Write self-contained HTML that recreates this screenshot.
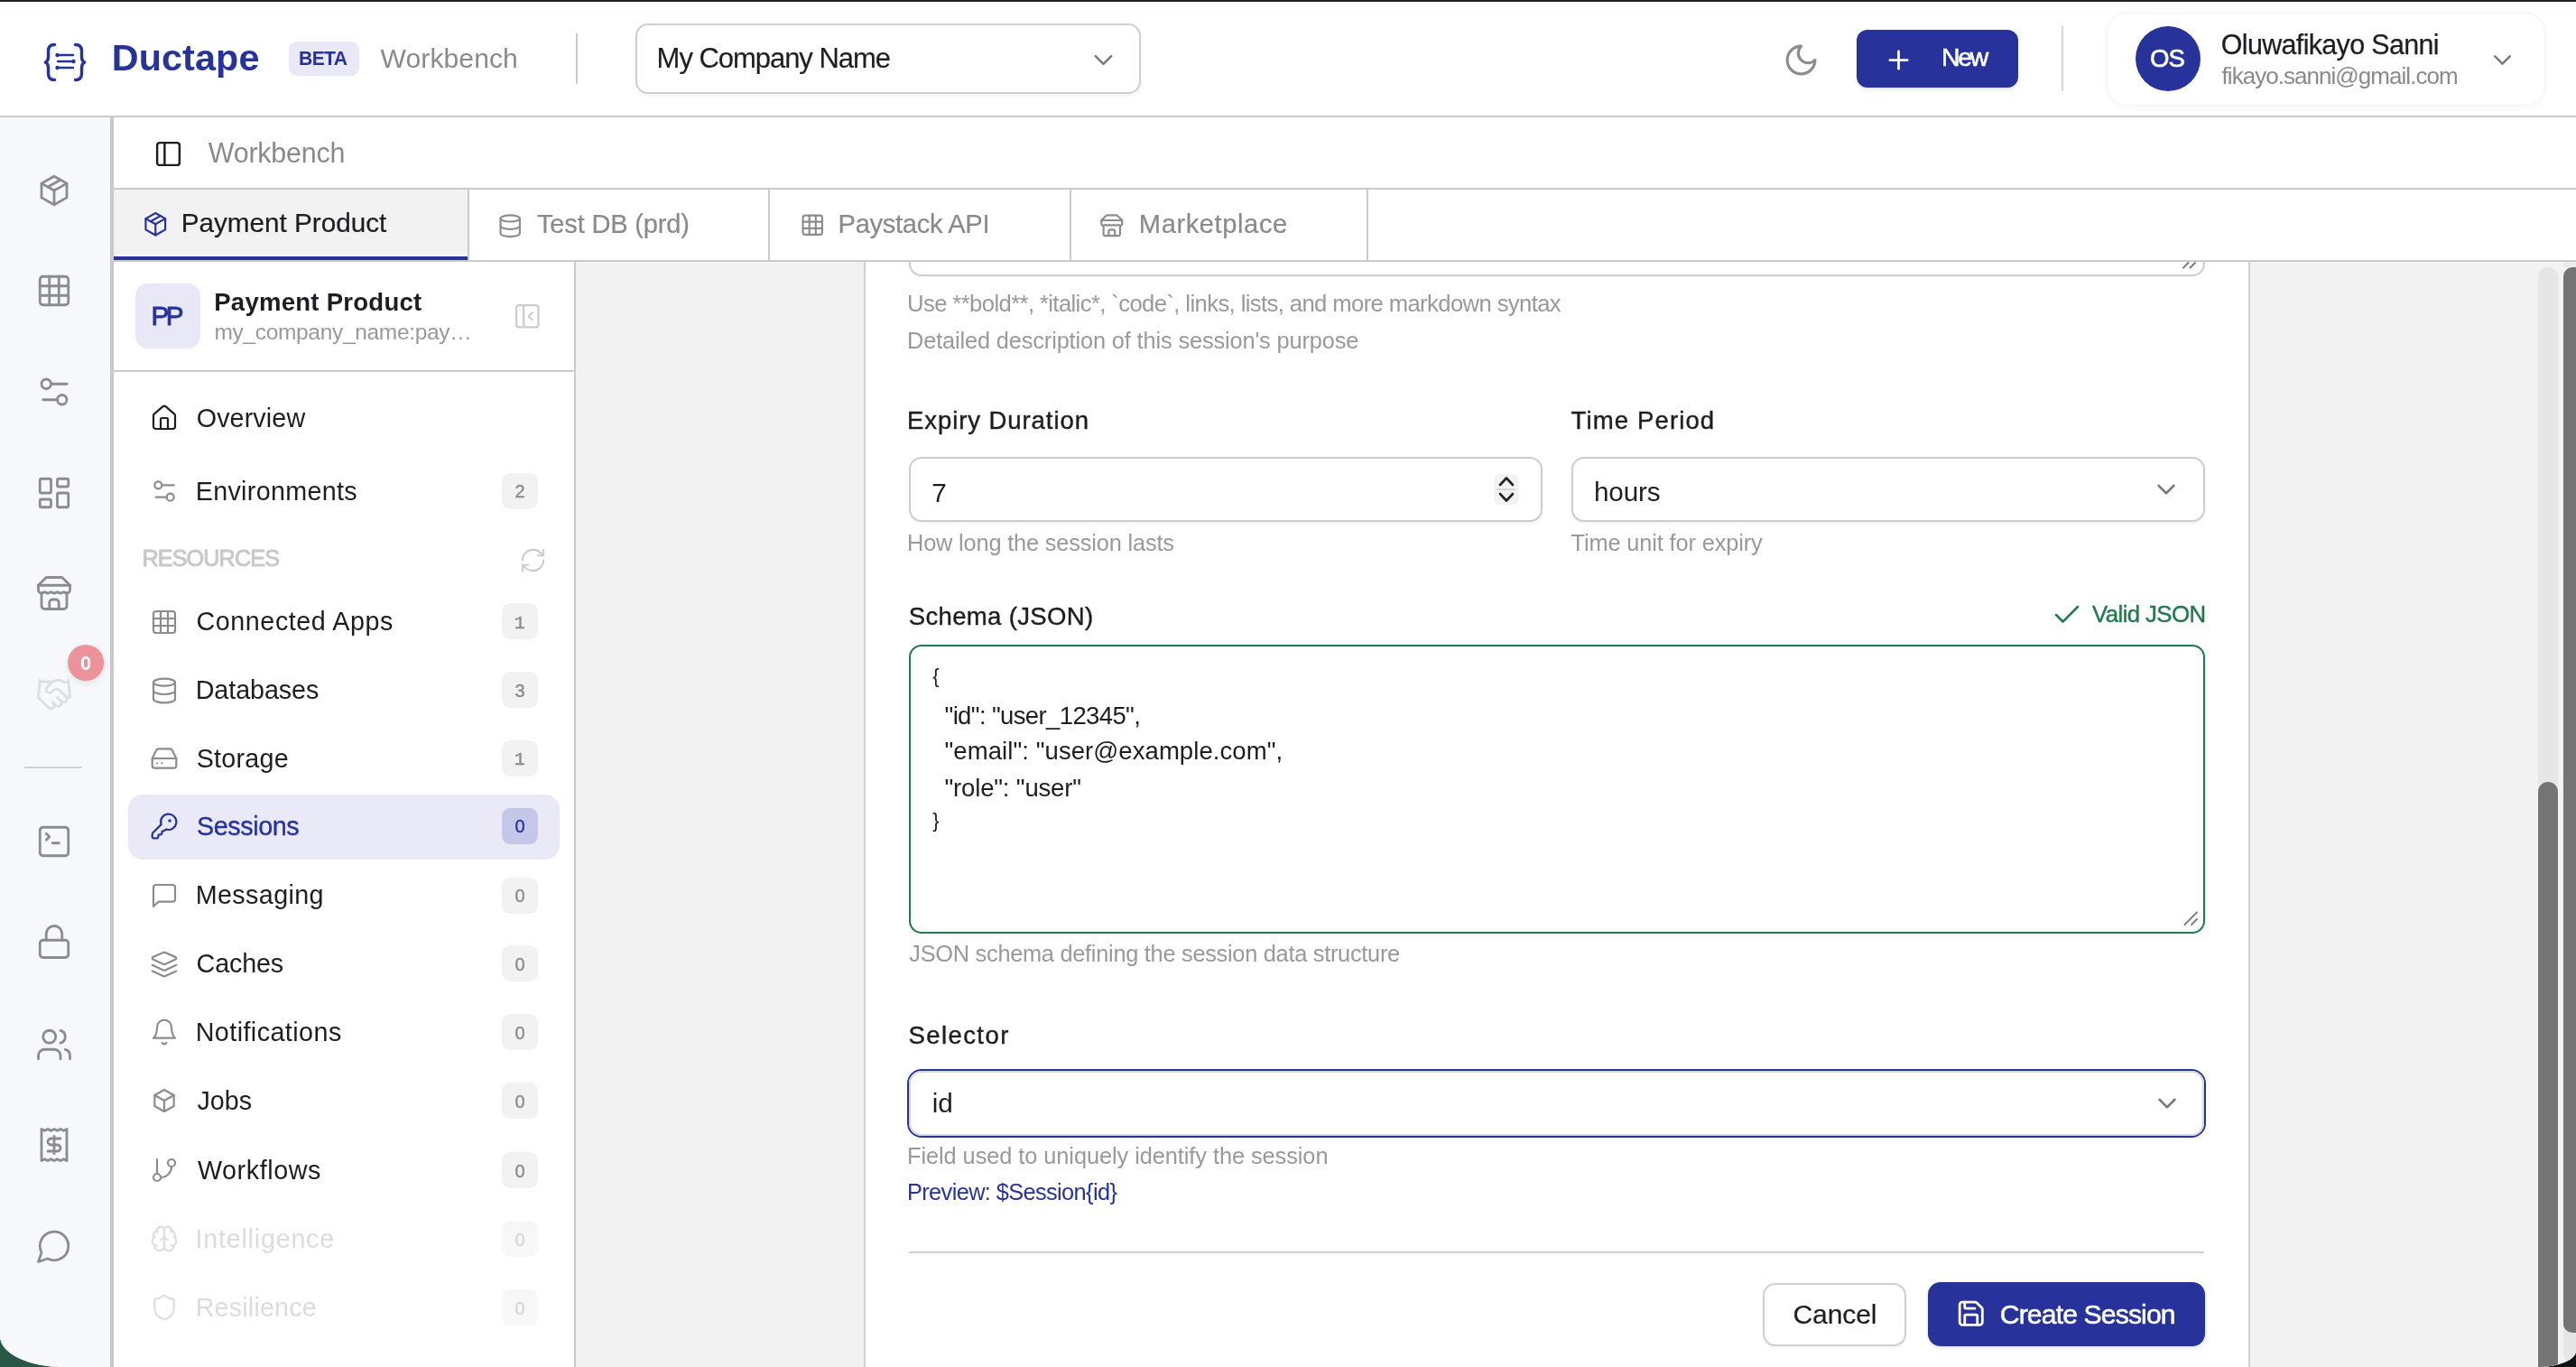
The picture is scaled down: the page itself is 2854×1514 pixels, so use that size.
<!DOCTYPE html>
<html><head><meta charset="utf-8"><title>Ductape Workbench</title>
<style>
html,body{margin:0;padding:0;}
body{width:2854px;height:1514px;overflow:hidden;position:relative;background:#2a5646;font-family:"Liberation Sans",sans-serif;}
#bgr{position:absolute;left:1427px;top:1400px;width:1427px;height:114px;background:#111416;}
#app{position:absolute;left:0;top:0;width:2854px;height:1514px;overflow:hidden;background:#fff;border-radius:0 0 43px 70px / 0 0 18px 34px;will-change:transform;}
.r{position:absolute;box-sizing:border-box;}
.t{position:absolute;white-space:nowrap;}
.i{position:absolute;overflow:visible;}
</style></head><body>
<div id="bgr"></div>
<div id="app">
<div class="r" style="left:0px;top:0px;width:2854px;height:2px;background:#1e2226"></div>
<div class="r" style="left:0px;top:128px;width:2854px;height:2px;background:#cacaca"></div>
<div class="r" style="left:0px;top:130px;width:122px;height:1384px;background:#f7f8fc"></div>
<div class="r" style="left:122px;top:130px;width:4px;height:1384px;background:#c9c9c9"></div>
<div class="r" style="left:125px;top:208px;width:2729px;height:2px;background:#cacaca"></div>
<div class="r" style="left:126px;top:210px;width:392px;height:78px;background:#f2f2f2"></div>
<div class="r" style="left:126px;top:284px;width:392px;height:4px;background:#27339b"></div>
<div class="r" style="left:125px;top:288px;width:2729px;height:2px;background:#cacaca"></div>
<div class="r" style="left:518px;top:210px;width:2px;height:78px;background:#cacaca"></div>
<div class="r" style="left:851px;top:210px;width:2px;height:78px;background:#cacaca"></div>
<div class="r" style="left:1185px;top:210px;width:2px;height:78px;background:#cacaca"></div>
<div class="r" style="left:1514px;top:210px;width:2px;height:78px;background:#cacaca"></div>
<div class="r" style="left:636px;top:290px;width:2px;height:1224px;background:#cacaca"></div>
<div class="r" style="left:638px;top:290px;width:2216px;height:1224px;background:#f2f2f2"></div>
<div class="r" style="left:957px;top:290px;width:1536px;height:1224px;background:#fff;border-left:2px solid #d0d0d0;border-right:2px solid #d0d0d0"></div>
<svg class="i" style="left:46px;top:46px" width="52" height="46" viewBox="0 0 52 46" fill="none" stroke="#27339b" stroke-linecap="round" stroke-linejoin="round"><path d="M14.5 3.5c-5 0-7 2.5-7 7v6.5c0 3-1 5-3.2 6c2.2 1 3.2 3 3.2 6v6.5c0 4.5 2 7 7 7" stroke-width="3.4"/><path d="M37.5 3.5c5 0 7 2.5 7 7v6.5c0 3 1 5 3.2 6c-2.2 1-3.2 3-3.2 6v6.5c0 4.5-2 7-7 7" stroke-width="3.4"/><path d="M18 15h17M18 22h17M18 29h17" stroke-width="2.4"/><circle cx="17.5" cy="15" r="2.2" fill="#27339b" stroke="none"/><circle cx="35.5" cy="22" r="2.2" fill="#27339b" stroke="none"/><circle cx="17.5" cy="29" r="2.2" fill="#27339b" stroke="none"/></svg>
<div class="t" style="left:123.7px;top:43.8px;font-size:41.30px;line-height:41.30px;color:#27339b;font-family:'Liberation Sans', sans-serif;font-weight:700;letter-spacing:0.13px;">Ductape</div>
<div class="r" style="left:320px;top:46px;width:78px;height:38px;background:#e8e8f6;border-radius:9px"></div>
<div class="t" style="left:331.0px;top:54.1px;font-size:21.16px;line-height:21.16px;color:#27339b;font-family:'Liberation Sans', sans-serif;font-weight:700;letter-spacing:-0.65px;">BETA</div>
<div class="t" style="left:421.6px;top:49.5px;font-size:30.14px;line-height:30.14px;color:#8a8a8a;font-family:'Liberation Sans', sans-serif;letter-spacing:0.05px;">Workbench</div>
<div class="r" style="left:638px;top:37px;width:2px;height:56px;background:#cacaca"></div>
<div class="r" style="left:704px;top:26px;width:560px;height:78px;border:2px solid #d0d0d0;border-radius:14px;background:#fff;box-shadow:0 2px 4px rgba(0,0,0,0.06)"></div>
<div class="t" style="left:727.6px;top:49.2px;font-size:31.01px;line-height:31.01px;color:#1c1e22;font-family:'Liberation Sans', sans-serif;-webkit-text-stroke:0.15px #1c1e22;letter-spacing:-1.04px;">My Company Name</div>
<svg class="i" style="left:1204.5px;top:48.5px;" width="35" height="35" viewBox="0 0 24 24" fill="none" stroke="#7a7a7a" stroke-width="1.75" stroke-linecap="round" stroke-linejoin="round"><path d="m6 9 6 6 6-6"/></svg>
<svg class="i" style="left:1975.0px;top:45.5px;" width="41" height="41" viewBox="0 0 24 24" fill="none" stroke="#8c8c8c" stroke-width="1.85" stroke-linecap="round" stroke-linejoin="round"><path d="M12 3a6 6 0 0 0 9 9 9 9 0 1 1-9-9Z"/></svg>
<div class="r" style="left:2057px;top:33px;width:179px;height:64px;background:#27339b;border-radius:12px;box-shadow:0 2px 4px rgba(0,0,0,0.12)"></div>
<svg class="i" style="left:2087.2px;top:49.5px;" width="33" height="33" viewBox="0 0 24 24" fill="none" stroke="#fff" stroke-width="2.0" stroke-linecap="round" stroke-linejoin="round"><path d="M5 12h14"/><path d="M12 5v14"/></svg>
<div class="t" style="left:2151.0px;top:49.2px;font-size:28.41px;line-height:28.41px;color:#fff;font-family:'Liberation Sans', sans-serif;-webkit-text-stroke:0.6px #fff;letter-spacing:-2.29px;">New</div>
<div class="r" style="left:2284px;top:29px;width:2px;height:72px;background:#d8d8d8"></div>
<div class="r" style="left:2334px;top:14px;width:486px;height:103px;border:1px solid #f4f4f4;border-radius:22px;background:#fff;box-shadow:0 2px 8px rgba(0,0,0,0.04)"></div>
<div class="r" style="left:2366px;top:29px;width:72px;height:72px;background:#27339b;border-radius:50%"></div>
<div class="t" style="left:2382.1px;top:50.7px;font-size:27.54px;line-height:27.54px;color:#fff;font-family:'Liberation Sans', sans-serif;-webkit-text-stroke:0.7px #fff;letter-spacing:-1.01px;">OS</div>
<div class="t" style="left:2460.8px;top:33.5px;font-size:30.43px;line-height:30.43px;color:#1c1e22;font-family:'Liberation Sans', sans-serif;-webkit-text-stroke:0.25px #1c1e22;letter-spacing:-0.64px;">Oluwafikayo Sanni</div>
<div class="t" style="left:2461.6px;top:71.3px;font-size:26.00px;line-height:26.00px;color:#8a8a8a;font-family:'Liberation Sans', sans-serif;letter-spacing:-0.96px;">fikayo.sanni@gmail.com</div>
<svg class="i" style="left:2755.5px;top:49.5px;" width="33" height="33" viewBox="0 0 24 24" fill="none" stroke="#7a7a7a" stroke-width="1.8" stroke-linecap="round" stroke-linejoin="round"><path d="m6 9 6 6 6-6"/></svg>
<svg class="i" style="left:169.5px;top:153.5px;" width="33" height="33" viewBox="0 0 24 24" fill="none" stroke="#1c1e22" stroke-width="1.8" stroke-linecap="round" stroke-linejoin="round"><rect width="18" height="18" x="3" y="3" rx="2"/><path d="M9 3v18"/></svg>
<div class="t" style="left:230.8px;top:153.5px;font-size:30.43px;line-height:30.43px;color:#8a8a8a;font-family:'Liberation Sans', sans-serif;letter-spacing:-0.22px;">Workbench</div>
<svg class="i" style="left:155.5px;top:231.8px;" width="32.5" height="32.5" viewBox="0 0 24 24" fill="none" stroke="#27339b" stroke-width="1.6" stroke-linecap="round" stroke-linejoin="round"><path d="M12 3l8 4.5l0 9l-8 4.5l-8 -4.5l0 -9l8 -4.5"/><path d="M12 12l8 -4.5"/><path d="M12 12l0 9"/><path d="M12 12l-8 -4.5"/><path d="M16 5.25l-8 4.5"/></svg>
<div class="t" style="left:200.7px;top:232.2px;font-size:29.71px;line-height:29.71px;color:#1c1e22;font-family:'Liberation Sans', sans-serif;-webkit-text-stroke:0.2px #1c1e22;letter-spacing:-0.02px;">Payment Product</div>
<svg class="i" style="left:550.8px;top:235.6px;" width="28.5" height="28.5" viewBox="0 0 24 24" fill="none" stroke="#8c8c8c" stroke-width="1.8" stroke-linecap="round" stroke-linejoin="round"><ellipse cx="12" cy="5" rx="9" ry="3"/><path d="M3 5V19A9 3 0 0 0 21 19V5"/><path d="M3 12A9 3 0 0 0 21 12"/></svg>
<div class="t" style="left:595.0px;top:234.3px;font-size:29.13px;line-height:29.13px;color:#8a8a8a;font-family:'Liberation Sans', sans-serif;-webkit-text-stroke:0.2px #8a8a8a;letter-spacing:-0.22px;">Test DB (prd)</div>
<svg class="i" style="left:885.8px;top:235.4px;" width="28.5" height="28.5" viewBox="0 0 24 24" fill="none" stroke="#8c8c8c" stroke-width="1.8" stroke-linecap="round" stroke-linejoin="round"><rect width="18" height="18" x="3" y="3" rx="2"/><path d="M3 9h18"/><path d="M3 15h18"/><path d="M9 3v18"/><path d="M15 3v18"/></svg>
<div class="t" style="left:928.6px;top:234.3px;font-size:29.13px;line-height:29.13px;color:#8a8a8a;font-family:'Liberation Sans', sans-serif;-webkit-text-stroke:0.2px #8a8a8a;letter-spacing:-0.33px;">Paystack API</div>
<svg class="i" style="left:1218.2px;top:236.1px;" width="27.5" height="27.5" viewBox="0 0 24 24" fill="none" stroke="#8c8c8c" stroke-width="1.9" stroke-linecap="round" stroke-linejoin="round"><path d="m2 7 4.41-4.41A2 2 0 0 1 7.83 2h8.34a2 2 0 0 1 1.42.59L22 7"/><path d="M4 12v8a2 2 0 0 0 2 2h12a2 2 0 0 0 2-2v-8"/><path d="M15 22v-4a2 2 0 0 0-2-2h-2a2 2 0 0 0-2 2v4"/><path d="M2 7h20"/><path d="M22 7v3a2 2 0 0 1-2 2a2.7 2.7 0 0 1-1.59-.63.7.7 0 0 0-.82 0A2.7 2.7 0 0 1 16 12a2.7 2.7 0 0 1-1.59-.63.7.7 0 0 0-.82 0A2.7 2.7 0 0 1 12 12a2.7 2.7 0 0 1-1.59-.63.7.7 0 0 0-.82 0A2.7 2.7 0 0 1 8 12a2.7 2.7 0 0 1-1.59-.63.7.7 0 0 0-.82 0A2.7 2.7 0 0 1 4 12a2 2 0 0 1-2-2V7"/></svg>
<div class="t" style="left:1261.8px;top:234.3px;font-size:29.13px;line-height:29.13px;color:#8a8a8a;font-family:'Liberation Sans', sans-serif;-webkit-text-stroke:0.2px #8a8a8a;letter-spacing:0.58px;">Marketplace</div>
<svg class="i" style="left:39.0px;top:189.5px;" width="42" height="42" viewBox="0 0 24 24" fill="none" stroke="#8c8c8c" stroke-width="1.6" stroke-linecap="round" stroke-linejoin="round"><path d="M12 3l8 4.5l0 9l-8 4.5l-8 -4.5l0 -9l8 -4.5"/><path d="M12 12l8 -4.5"/><path d="M12 12l0 9"/><path d="M12 12l-8 -4.5"/><path d="M16 5.25l-8 4.5"/></svg>
<svg class="i" style="left:39.0px;top:301.0px;" width="42" height="42" viewBox="0 0 24 24" fill="none" stroke="#8c8c8c" stroke-width="1.6" stroke-linecap="round" stroke-linejoin="round"><rect width="18" height="18" x="3" y="3" rx="2"/><path d="M3 9h18"/><path d="M3 15h18"/><path d="M9 3v18"/><path d="M15 3v18"/></svg>
<svg class="i" style="left:39.0px;top:413.0px;" width="42" height="42" viewBox="0 0 24 24" fill="none" stroke="#8c8c8c" stroke-width="1.6" stroke-linecap="round" stroke-linejoin="round"><path d="M20 7h-9"/><path d="M14 17H5"/><circle cx="17" cy="17" r="3"/><circle cx="7" cy="7" r="3"/></svg>
<svg class="i" style="left:39.0px;top:524.6px;" width="42" height="42" viewBox="0 0 24 24" fill="none" stroke="#8c8c8c" stroke-width="1.6" stroke-linecap="round" stroke-linejoin="round"><rect width="7" height="9" x="3" y="3" rx="1"/><rect width="7" height="5" x="14" y="3" rx="1"/><rect width="7" height="9" x="14" y="12" rx="1"/><rect width="7" height="5" x="3" y="16" rx="1"/></svg>
<svg class="i" style="left:39.0px;top:636.0px;" width="42" height="42" viewBox="0 0 24 24" fill="none" stroke="#8c8c8c" stroke-width="1.6" stroke-linecap="round" stroke-linejoin="round"><path d="m2 7 4.41-4.41A2 2 0 0 1 7.83 2h8.34a2 2 0 0 1 1.42.59L22 7"/><path d="M4 12v8a2 2 0 0 0 2 2h12a2 2 0 0 0 2-2v-8"/><path d="M15 22v-4a2 2 0 0 0-2-2h-2a2 2 0 0 0-2 2v4"/><path d="M2 7h20"/><path d="M22 7v3a2 2 0 0 1-2 2a2.7 2.7 0 0 1-1.59-.63.7.7 0 0 0-.82 0A2.7 2.7 0 0 1 16 12a2.7 2.7 0 0 1-1.59-.63.7.7 0 0 0-.82 0A2.7 2.7 0 0 1 12 12a2.7 2.7 0 0 1-1.59-.63.7.7 0 0 0-.82 0A2.7 2.7 0 0 1 8 12a2.7 2.7 0 0 1-1.59-.63.7.7 0 0 0-.82 0A2.7 2.7 0 0 1 4 12a2 2 0 0 1-2-2V7"/></svg>
<svg class="i" style="left:39.0px;top:748.0px;" width="42" height="42" viewBox="0 0 24 24" fill="none" stroke="#dedede" stroke-width="1.6" stroke-linecap="round" stroke-linejoin="round"><path d="m11 17 2 2a1 1 0 1 0 3-3"/><path d="m14 14 2.5 2.5a1 1 0 1 0 3-3l-3.88-3.88a3 3 0 0 0-4.24 0l-.88.88a1 1 0 1 1-3-3l2.81-2.81a5.79 5.79 0 0 1 7.06-.87l.47.28a2 2 0 0 0 1.42.25L21 4"/><path d="m21 3 1 11h-2"/><path d="M3 3 2 14l6.5 6.5a1 1 0 1 0 3-3"/><path d="M3 4h8"/></svg>
<svg class="i" style="left:39.0px;top:910.5px;" width="42" height="42" viewBox="0 0 24 24" fill="none" stroke="#8c8c8c" stroke-width="1.6" stroke-linecap="round" stroke-linejoin="round"><path d="m7 11 2-2-2-2"/><path d="M11 13h4"/><rect width="18" height="18" x="3" y="3" rx="2" ry="2"/></svg>
<svg class="i" style="left:39.0px;top:1022.0px;" width="42" height="42" viewBox="0 0 24 24" fill="none" stroke="#8c8c8c" stroke-width="1.6" stroke-linecap="round" stroke-linejoin="round"><rect width="18" height="11" x="3" y="11" rx="2" ry="2"/><path d="M7 11V7a5 5 0 0 1 10 0v4"/></svg>
<svg class="i" style="left:39.0px;top:1135.5px;" width="42" height="42" viewBox="0 0 24 24" fill="none" stroke="#8c8c8c" stroke-width="1.6" stroke-linecap="round" stroke-linejoin="round"><path d="M16 21v-2a4 4 0 0 0-4-4H6a4 4 0 0 0-4 4v2"/><circle cx="9" cy="7" r="4"/><path d="M22 21v-2a4 4 0 0 0-3-3.87"/><path d="M16 3.13a4 4 0 0 1 0 7.75"/></svg>
<svg class="i" style="left:39.0px;top:1246.6px;" width="42" height="42" viewBox="0 0 24 24" fill="none" stroke="#8c8c8c" stroke-width="1.6" stroke-linecap="round" stroke-linejoin="round"><path d="M4 2v20l2-1 2 1 2-1 2 1 2-1 2 1 2-1 2 1V2l-2 1-2-1-2 1-2-1-2 1-2-1-2 1Z"/><path d="M16 8h-6a2 2 0 1 0 0 4h4a2 2 0 1 1 0 4H8"/><path d="M12 17.5v-11"/></svg>
<svg class="i" style="left:39.0px;top:1359.0px;" width="42" height="42" viewBox="0 0 24 24" fill="none" stroke="#8c8c8c" stroke-width="1.6" stroke-linecap="round" stroke-linejoin="round"><path d="M7.9 20A9 9 0 1 0 4 16.1L2 22Z"/></svg>
<div class="r" style="left:27px;top:849px;width:64px;height:2px;background:#d0d0d0"></div>
<div class="r" style="left:75px;top:714px;width:40px;height:40px;background:#eb929b;border-radius:50%;box-shadow:0 3px 8px rgba(0,0,0,0.08)"></div>
<div class="t" style="left:89.0px;top:723.6px;font-size:21.74px;line-height:21.74px;color:#fff;font-family:'Liberation Sans', sans-serif;font-weight:700;">0</div>
<div class="r" style="left:150px;top:314px;width:72px;height:72px;background:#e8e8f6;border-radius:14px"></div>
<div class="t" style="left:167.4px;top:334.8px;font-size:29.71px;line-height:29.71px;color:#27339b;font-family:'Liberation Sans', sans-serif;-webkit-text-stroke:0.9px #27339b;letter-spacing:-3.55px;">PP</div>
<div class="t" style="left:237.2px;top:320.5px;font-size:27.54px;line-height:27.54px;color:#1c1e22;font-family:'Liberation Sans', sans-serif;font-weight:700;letter-spacing:0.26px;">Payment Product</div>
<div class="t" style="left:237.4px;top:356.3px;font-size:24.50px;line-height:24.50px;color:#999999;font-family:'Liberation Sans', sans-serif;letter-spacing:-0.32px;">my_company_name:pay…</div>
<svg class="i" style="left:567.6px;top:333.6px;" width="32.5" height="32.5" viewBox="0 0 24 24" fill="none" stroke="#cccccc" stroke-width="1.65" stroke-linecap="round" stroke-linejoin="round"><rect width="18" height="18" x="3" y="3" rx="2"/><path d="M9 3v18"/><path d="m16 15-3-3 3-3"/></svg>
<div class="r" style="left:125px;top:410px;width:511px;height:2px;background:#cacaca"></div>
<svg class="i" style="left:166.2px;top:447.2px;" width="32" height="32" viewBox="0 0 24 24" fill="none" stroke="#1c1e22" stroke-width="1.65" stroke-linecap="round" stroke-linejoin="round"><path d="M15 21v-8a1 1 0 0 0-1-1h-4a1 1 0 0 0-1 1v8"/><path d="M3 10a2 2 0 0 1 .709-1.528l7-5.999a2 2 0 0 1 2.582 0l7 5.999A2 2 0 0 1 21 10v9a2 2 0 0 1-2 2H5a2 2 0 0 1-2-2z"/></svg>
<div class="t" style="left:217.7px;top:448.7px;font-size:28.70px;line-height:28.70px;color:#1c1e22;font-family:'Liberation Sans', sans-serif;letter-spacing:0.13px;">Overview</div>
<svg class="i" style="left:166.2px;top:528.0px;" width="32" height="32" viewBox="0 0 24 24" fill="none" stroke="#8c8c8c" stroke-width="1.65" stroke-linecap="round" stroke-linejoin="round"><path d="M20 7h-9"/><path d="M14 17H5"/><circle cx="17" cy="17" r="3"/><circle cx="7" cy="7" r="3"/></svg>
<div class="t" style="left:216.7px;top:529.5px;font-size:28.70px;line-height:28.70px;color:#1c1e22;font-family:'Liberation Sans', sans-serif;letter-spacing:0.32px;">Environments</div>
<div class="r" style="left:556px;top:523.8px;width:40px;height:40px;background:#f2f2f2;border-radius:9px"></div>
<div class="t" style="left:570.5px;top:534.3px;font-size:20.00px;line-height:20.00px;color:#8a8a8a;font-family:'Liberation Sans', sans-serif;-webkit-text-stroke:0.35px #8a8a8a;">2</div>
<div class="t" style="left:157.4px;top:606.1px;font-size:25.22px;line-height:25.22px;color:#c8c8c8;font-family:'Liberation Sans', sans-serif;-webkit-text-stroke:0.9px #c8c8c8;letter-spacing:-0.89px;">RESOURCES</div>
<svg class="i" style="left:574.5px;top:604.5px;" width="31" height="31" viewBox="0 0 24 24" fill="none" stroke="#cccccc" stroke-width="1.6" stroke-linecap="round" stroke-linejoin="round"><path d="M3 12a9 9 0 0 1 9-9 9.75 9.75 0 0 1 6.74 2.74L21 8"/><path d="M21 3v5h-5"/><path d="M21 12a9 9 0 0 1-9 9 9.75 9.75 0 0 1-6.74-2.74L3 16"/><path d="M8 16H3v5"/></svg>
<svg class="i" style="left:166.2px;top:672.6px;" width="32" height="32" viewBox="0 0 24 24" fill="none" stroke="#8c8c8c" stroke-width="1.65" stroke-linecap="round" stroke-linejoin="round"><rect width="18" height="18" x="3" y="3" rx="2"/><path d="M3 9h18"/><path d="M3 15h18"/><path d="M9 3v18"/><path d="M15 3v18"/></svg>
<div class="t" style="left:217.6px;top:674.1px;font-size:28.70px;line-height:28.70px;color:#1c1e22;font-family:'Liberation Sans', sans-serif;letter-spacing:0.55px;">Connected Apps</div>
<div class="r" style="left:556px;top:668.4px;width:40px;height:40px;background:#f2f2f2;border-radius:9px"></div>
<div class="t" style="left:569.8px;top:680.5px;font-size:20.00px;line-height:20.00px;color:#8a8a8a;font-family:'Liberation Mono', monospace;-webkit-text-stroke:0.35px #8a8a8a;">1</div>
<svg class="i" style="left:166.2px;top:748.6px;" width="32" height="32" viewBox="0 0 24 24" fill="none" stroke="#8c8c8c" stroke-width="1.65" stroke-linecap="round" stroke-linejoin="round"><ellipse cx="12" cy="5" rx="9" ry="3"/><path d="M3 5V19A9 3 0 0 0 21 19V5"/><path d="M3 12A9 3 0 0 0 21 12"/></svg>
<div class="t" style="left:216.7px;top:750.1px;font-size:28.70px;line-height:28.70px;color:#1c1e22;font-family:'Liberation Sans', sans-serif;letter-spacing:-0.06px;">Databases</div>
<div class="r" style="left:556px;top:744.4px;width:40px;height:40px;background:#f2f2f2;border-radius:9px"></div>
<div class="t" style="left:570.5px;top:754.9px;font-size:20.00px;line-height:20.00px;color:#8a8a8a;font-family:'Liberation Sans', sans-serif;-webkit-text-stroke:0.35px #8a8a8a;">3</div>
<svg class="i" style="left:166.2px;top:824.2px;" width="32" height="32" viewBox="0 0 24 24" fill="none" stroke="#8c8c8c" stroke-width="1.65" stroke-linecap="round" stroke-linejoin="round"><line x1="22" x2="2" y1="12" y2="12"/><path d="M5.45 5.11 2 12v6a2 2 0 0 0 2 2h16a2 2 0 0 0 2-2v-6l-3.45-6.89A2 2 0 0 0 16.76 4H7.24a2 2 0 0 0-1.79 1.11z"/><line x1="6" x2="6.01" y1="16" y2="16"/><line x1="10" x2="10.01" y1="16" y2="16"/></svg>
<div class="t" style="left:217.7px;top:825.7px;font-size:28.70px;line-height:28.70px;color:#1c1e22;font-family:'Liberation Sans', sans-serif;letter-spacing:0.24px;">Storage</div>
<div class="r" style="left:556px;top:820px;width:40px;height:40px;background:#f2f2f2;border-radius:9px"></div>
<div class="t" style="left:569.8px;top:832.1px;font-size:20.00px;line-height:20.00px;color:#8a8a8a;font-family:'Liberation Mono', monospace;-webkit-text-stroke:0.35px #8a8a8a;">1</div>
<div class="r" style="left:142px;top:880px;width:478px;height:72px;background:#e9e9f7;border-radius:16px"></div>
<svg class="i" style="left:166.2px;top:899.0px;" width="32" height="32" viewBox="0 0 24 24" fill="none" stroke="#27339b" stroke-width="1.65" stroke-linecap="round" stroke-linejoin="round"><path d="M2.586 17.414A2 2 0 0 0 2 18.828V21a1 1 0 0 0 1 1h3a1 1 0 0 0 1-1v-1a1 1 0 0 1 1-1h1a1 1 0 0 0 1-1v-1a1 1 0 0 1 1-1h.172a2 2 0 0 0 1.414-.586l.814-.814a6.5 6.5 0 1 0-4-4z"/><circle cx="16.5" cy="7.5" r=".5" fill="currentColor"/></svg>
<div class="t" style="left:217.9px;top:900.5px;font-size:28.70px;line-height:28.70px;color:#27339b;font-family:'Liberation Sans', sans-serif;-webkit-text-stroke:0.35px #27339b;letter-spacing:-0.37px;">Sessions</div>
<div class="r" style="left:556px;top:894.8px;width:40px;height:40px;background:#c5c7e8;border-radius:9px"></div>
<div class="t" style="left:570.4px;top:905.3px;font-size:20.00px;line-height:20.00px;color:#27339b;font-family:'Liberation Sans', sans-serif;-webkit-text-stroke:0.35px #27339b;">0</div>
<svg class="i" style="left:166.2px;top:975.7px;" width="32" height="32" viewBox="0 0 24 24" fill="none" stroke="#8c8c8c" stroke-width="1.65" stroke-linecap="round" stroke-linejoin="round"><path d="M21 15a2 2 0 0 1-2 2H7l-4 4V5a2 2 0 0 1 2-2h14a2 2 0 0 1 2 2z"/></svg>
<div class="t" style="left:216.7px;top:977.2px;font-size:28.70px;line-height:28.70px;color:#1c1e22;font-family:'Liberation Sans', sans-serif;letter-spacing:0.39px;">Messaging</div>
<div class="r" style="left:556px;top:971.5px;width:40px;height:40px;background:#f2f2f2;border-radius:9px"></div>
<div class="t" style="left:570.4px;top:982.0px;font-size:20.00px;line-height:20.00px;color:#8a8a8a;font-family:'Liberation Sans', sans-serif;-webkit-text-stroke:0.35px #8a8a8a;">0</div>
<svg class="i" style="left:166.2px;top:1051.5px;" width="32" height="32" viewBox="0 0 24 24" fill="none" stroke="#8c8c8c" stroke-width="1.65" stroke-linecap="round" stroke-linejoin="round"><path d="m12.83 2.18a2 2 0 0 0-1.66 0L2.6 6.08a1 1 0 0 0 0 1.83l8.58 3.91a2 2 0 0 0 1.66 0l8.58-3.9a1 1 0 0 0 0-1.83Z"/><path d="m22 17.65-9.17 4.16a2 2 0 0 1-1.66 0L2 17.65"/><path d="m22 12.65-9.17 4.16a2 2 0 0 1-1.66 0L2 12.65"/></svg>
<div class="t" style="left:217.6px;top:1053.0px;font-size:28.70px;line-height:28.70px;color:#1c1e22;font-family:'Liberation Sans', sans-serif;letter-spacing:-0.13px;">Caches</div>
<div class="r" style="left:556px;top:1047.3px;width:40px;height:40px;background:#f2f2f2;border-radius:9px"></div>
<div class="t" style="left:570.4px;top:1057.8px;font-size:20.00px;line-height:20.00px;color:#8a8a8a;font-family:'Liberation Sans', sans-serif;-webkit-text-stroke:0.35px #8a8a8a;">0</div>
<svg class="i" style="left:166.2px;top:1127.2px;" width="32" height="32" viewBox="0 0 24 24" fill="none" stroke="#8c8c8c" stroke-width="1.65" stroke-linecap="round" stroke-linejoin="round"><path d="M6 8a6 6 0 0 1 12 0c0 7 3 9 3 9H3s3-2 3-9"/><path d="M10.3 21a1.94 1.94 0 0 0 3.4 0"/></svg>
<div class="t" style="left:216.7px;top:1128.7px;font-size:28.70px;line-height:28.70px;color:#1c1e22;font-family:'Liberation Sans', sans-serif;letter-spacing:0.44px;">Notifications</div>
<div class="r" style="left:556px;top:1123px;width:40px;height:40px;background:#f2f2f2;border-radius:9px"></div>
<div class="t" style="left:570.4px;top:1133.5px;font-size:20.00px;line-height:20.00px;color:#8a8a8a;font-family:'Liberation Sans', sans-serif;-webkit-text-stroke:0.35px #8a8a8a;">0</div>
<svg class="i" style="left:166.2px;top:1203.2px;" width="32" height="32" viewBox="0 0 24 24" fill="none" stroke="#8c8c8c" stroke-width="1.65" stroke-linecap="round" stroke-linejoin="round"><path d="M12 3l8 4.5l0 9l-8 4.5l-8 -4.5l0 -9l8 -4.5"/><path d="M12 12l8 -4.5"/><path d="M12 12l0 9"/><path d="M12 12l-8 -4.5"/></svg>
<div class="t" style="left:218.6px;top:1204.7px;font-size:28.70px;line-height:28.70px;color:#1c1e22;font-family:'Liberation Sans', sans-serif;letter-spacing:-0.07px;">Jobs</div>
<div class="r" style="left:556px;top:1199px;width:40px;height:40px;background:#f2f2f2;border-radius:9px"></div>
<div class="t" style="left:570.4px;top:1209.5px;font-size:20.00px;line-height:20.00px;color:#8a8a8a;font-family:'Liberation Sans', sans-serif;-webkit-text-stroke:0.35px #8a8a8a;">0</div>
<svg class="i" style="left:166.2px;top:1280.2px;" width="32" height="32" viewBox="0 0 24 24" fill="none" stroke="#8c8c8c" stroke-width="1.65" stroke-linecap="round" stroke-linejoin="round"><line x1="6" x2="6" y1="3" y2="15"/><circle cx="18" cy="6" r="3"/><circle cx="6" cy="18" r="3"/><path d="M18 9a9 9 0 0 1-9 9"/></svg>
<div class="t" style="left:218.9px;top:1281.7px;font-size:28.70px;line-height:28.70px;color:#1c1e22;font-family:'Liberation Sans', sans-serif;letter-spacing:0.59px;">Workflows</div>
<div class="r" style="left:556px;top:1276px;width:40px;height:40px;background:#f2f2f2;border-radius:9px"></div>
<div class="t" style="left:570.4px;top:1286.5px;font-size:20.00px;line-height:20.00px;color:#8a8a8a;font-family:'Liberation Sans', sans-serif;-webkit-text-stroke:0.35px #8a8a8a;">0</div>
<svg class="i" style="left:166.2px;top:1356.2px;" width="32" height="32" viewBox="0 0 24 24" fill="none" stroke="#dedede" stroke-width="1.65" stroke-linecap="round" stroke-linejoin="round"><path d="M12 5a3 3 0 1 0-5.997.125 4 4 0 0 0-2.526 5.77 4 4 0 0 0 .556 6.588A4 4 0 1 0 12 18Z"/><path d="M12 5a3 3 0 1 1 5.997.125 4 4 0 0 1 2.526 5.77 4 4 0 0 1-.556 6.588A4 4 0 1 1 12 18Z"/><path d="M15 13a4.5 4.5 0 0 1-3-4 4.5 4.5 0 0 1-3 4"/><path d="M17.599 6.5a3 3 0 0 0 .399-1.375"/><path d="M6.003 5.125A3 3 0 0 0 6.401 6.5"/><path d="M3.477 10.896a4 4 0 0 1 .585-.396"/><path d="M19.938 10.5a4 4 0 0 1 .585.396"/><path d="M6 18a4 4 0 0 1-1.967-.516"/><path d="M19.967 17.484A4 4 0 0 1 18 18"/></svg>
<div class="t" style="left:216.4px;top:1357.7px;font-size:28.70px;line-height:28.70px;color:#dcdcdc;font-family:'Liberation Sans', sans-serif;letter-spacing:0.79px;">Intelligence</div>
<div class="r" style="left:556px;top:1352px;width:40px;height:40px;background:#f7f7f7;border-radius:9px"></div>
<div class="t" style="left:570.4px;top:1362.5px;font-size:20.00px;line-height:20.00px;color:#d6d6d6;font-family:'Liberation Sans', sans-serif;-webkit-text-stroke:0.35px #d6d6d6;">0</div>
<svg class="i" style="left:166.2px;top:1432.2px;" width="32" height="32" viewBox="0 0 24 24" fill="none" stroke="#dedede" stroke-width="1.65" stroke-linecap="round" stroke-linejoin="round"><path d="M20 13c0 5-3.5 7.5-7.66 8.95a1 1 0 0 1-.67-.01C7.5 20.5 4 18 4 13V6a1 1 0 0 1 1-1c2 0 4.5-1.2 6.24-2.72a1.17 1.17 0 0 1 1.52 0C14.51 3.81 17 5 19 5a1 1 0 0 1 1 1z"/></svg>
<div class="t" style="left:216.7px;top:1433.7px;font-size:28.70px;line-height:28.70px;color:#dcdcdc;font-family:'Liberation Sans', sans-serif;letter-spacing:0.19px;">Resilience</div>
<div class="r" style="left:556px;top:1428px;width:40px;height:40px;background:#f7f7f7;border-radius:9px"></div>
<div class="t" style="left:570.4px;top:1438.5px;font-size:20.00px;line-height:20.00px;color:#d6d6d6;font-family:'Liberation Sans', sans-serif;-webkit-text-stroke:0.35px #d6d6d6;">0</div>
<div class="r" style="left:1007px;top:290px;width:1436px;height:16px;border:2px solid #cdcdcd;border-top:none;border-radius:0 0 14px 14px;background:#fff"></div>
<svg class="i" style="left:2414px;top:289px" width="22" height="12" viewBox="0 0 22 12" stroke="#7a7a7a" stroke-width="2" stroke-linecap="round"><path d="M5 7.5L10.5 2M12.5 7.5L18 2"/></svg>
<div class="t" style="left:1005.1px;top:324.3px;font-size:25.65px;line-height:25.65px;color:#999999;font-family:'Liberation Sans', sans-serif;letter-spacing:-0.61px;">Use **bold**, *italic*, `code`, links, lists, and more markdown syntax</div>
<div class="t" style="left:1005.0px;top:364.5px;font-size:25.36px;line-height:25.36px;color:#999999;font-family:'Liberation Sans', sans-serif;letter-spacing:-0.14px;">Detailed description of this session&#x27;s purpose</div>
<div class="t" style="left:1005.0px;top:451.7px;font-size:27.54px;line-height:27.54px;color:#1c1e22;font-family:'Liberation Sans', sans-serif;-webkit-text-stroke:0.4px #1c1e22;letter-spacing:0.91px;">Expiry Duration</div>
<div class="t" style="left:1740.6px;top:451.7px;font-size:27.54px;line-height:27.54px;color:#1c1e22;font-family:'Liberation Sans', sans-serif;-webkit-text-stroke:0.4px #1c1e22;letter-spacing:1.12px;">Time Period</div>
<div class="r" style="left:1007px;top:506px;width:702px;height:72px;border:2px solid #cdcdcd;border-radius:14px;background:#fff;box-shadow:0 2px 3px rgba(0,0,0,0.05)"></div>
<div class="t" style="left:1032.3px;top:530.5px;font-size:29.71px;line-height:29.71px;color:#1c1e22;font-family:'Liberation Sans', sans-serif;">7</div>
<div class="r" style="left:1655px;top:525px;width:28px;height:34px;background:#f2f2f2;border-radius:7px"></div>
<svg class="i" style="left:1655px;top:525px" width="28" height="34" viewBox="0 0 28 34" fill="none" stroke-linecap="round" stroke-linejoin="round"><path d="M4 17h20" stroke="#d8d8d8" stroke-width="2"/><path d="M7 12l7-7.5l7 7.5M7 22l7 7.5l7-7.5" stroke="#222" stroke-width="2.6"/></svg>
<div class="r" style="left:1741px;top:506px;width:702px;height:72px;border:2px solid #cdcdcd;border-radius:14px;background:#fff;box-shadow:0 2px 3px rgba(0,0,0,0.05)"></div>
<div class="t" style="left:1765.9px;top:529.8px;font-size:29.71px;line-height:29.71px;color:#1c1e22;font-family:'Liberation Sans', sans-serif;letter-spacing:-0.14px;">hours</div>
<svg class="i" style="left:2383.0px;top:525.0px;" width="34" height="34" viewBox="0 0 24 24" fill="none" stroke="#7a7a7a" stroke-width="1.75" stroke-linecap="round" stroke-linejoin="round"><path d="m6 9 6 6 6-6"/></svg>
<div class="t" style="left:1005.0px;top:588.5px;font-size:25.36px;line-height:25.36px;color:#999999;font-family:'Liberation Sans', sans-serif;letter-spacing:-0.17px;">How long the session lasts</div>
<div class="t" style="left:1740.5px;top:588.5px;font-size:25.36px;line-height:25.36px;color:#999999;font-family:'Liberation Sans', sans-serif;letter-spacing:-0.13px;">Time unit for expiry</div>
<div class="t" style="left:1006.7px;top:668.5px;font-size:27.54px;line-height:27.54px;color:#1c1e22;font-family:'Liberation Sans', sans-serif;-webkit-text-stroke:0.4px #1c1e22;letter-spacing:0.34px;">Schema (JSON)</div>
<svg class="i" style="left:2272.0px;top:663.0px;" width="36" height="36" viewBox="0 0 24 24" fill="none" stroke="#1f7a4c" stroke-width="1.7" stroke-linecap="round" stroke-linejoin="round"><path d="M20 6 9 17l-5-5"/></svg>
<div class="t" style="left:2318.1px;top:668.0px;font-size:25.80px;line-height:25.80px;color:#1f7a4c;font-family:'Liberation Sans', sans-serif;-webkit-text-stroke:0.4px #1f7a4c;letter-spacing:-0.61px;">Valid JSON</div>
<div class="r" style="left:1007px;top:714px;width:1436px;height:320px;border:2.5px solid #1f7a4c;border-radius:14px;background:#fff"></div>
<svg class="i" style="left:2418px;top:1007px" width="20" height="20" viewBox="0 0 20 20" stroke="#808080" stroke-width="2" stroke-linecap="round"><path d="M2.5 17L16 3.5M10 17L16 11"/></svg>
<div class="t" style="left:1033.2px;top:738.4px;font-size:22.00px;line-height:22.00px;color:#1c1e22;font-family:'Liberation Sans', sans-serif;">{</div>
<div class="t" style="left:1046.5px;top:779.2px;font-size:27.54px;line-height:27.54px;color:#1c1e22;font-family:'Liberation Sans', sans-serif;letter-spacing:-0.64px;">&quot;id&quot;: &quot;user_12345&quot;,</div>
<div class="t" style="left:1046.5px;top:817.7px;font-size:27.54px;line-height:27.54px;color:#1c1e22;font-family:'Liberation Sans', sans-serif;letter-spacing:0.06px;">&quot;email&quot;: &quot;user@example.com&quot;,</div>
<div class="t" style="left:1046.5px;top:858.7px;font-size:27.54px;line-height:27.54px;color:#1c1e22;font-family:'Liberation Sans', sans-serif;letter-spacing:-0.18px;">&quot;role&quot;: &quot;user&quot;</div>
<div class="t" style="left:1033.2px;top:898.4px;font-size:22.00px;line-height:22.00px;color:#1c1e22;font-family:'Liberation Sans', sans-serif;">}</div>
<div class="t" style="left:1007.3px;top:1043.5px;font-size:25.36px;line-height:25.36px;color:#999999;font-family:'Liberation Sans', sans-serif;letter-spacing:-0.28px;">JSON schema defining the session data structure</div>
<div class="t" style="left:1006.4px;top:1132.7px;font-size:27.54px;line-height:27.54px;color:#1c1e22;font-family:'Liberation Sans', sans-serif;-webkit-text-stroke:0.4px #1c1e22;letter-spacing:1.42px;">Selector</div>
<div class="r" style="left:1005px;top:1184px;width:1439px;height:76px;border:2px solid #27339b;border-radius:16px;background:#fff"></div>
<div class="r" style="left:1007px;top:1186px;width:1435px;height:72px;border:2px solid #d6d6d6;border-radius:14px"></div>
<div class="t" style="left:1032.7px;top:1206.8px;font-size:29.71px;line-height:29.71px;color:#1c1e22;font-family:'Liberation Sans', sans-serif;">id</div>
<svg class="i" style="left:2383.7px;top:1205.0px;" width="34" height="34" viewBox="0 0 24 24" fill="none" stroke="#7a7a7a" stroke-width="1.75" stroke-linecap="round" stroke-linejoin="round"><path d="m6 9 6 6 6-6"/></svg>
<div class="t" style="left:1005.0px;top:1268.0px;font-size:25.36px;line-height:25.36px;color:#999999;font-family:'Liberation Sans', sans-serif;letter-spacing:-0.07px;">Field used to uniquely identify the session</div>
<div class="t" style="left:1005.0px;top:1307.5px;font-size:25.36px;line-height:25.36px;color:#27339b;font-family:'Liberation Sans', sans-serif;letter-spacing:-0.62px;">Preview: $Session{id}</div>
<div class="r" style="left:1007px;top:1386px;width:1435px;height:2px;background:#d0d0d0"></div>
<div class="r" style="left:1953px;top:1421px;width:159px;height:70px;border:2px solid #d0d0d0;border-radius:14px;background:#fff;box-shadow:0 2px 3px rgba(0,0,0,0.05)"></div>
<div class="t" style="left:1986.5px;top:1440.9px;font-size:30.14px;line-height:30.14px;color:#1c1e22;font-family:'Liberation Sans', sans-serif;-webkit-text-stroke:0.2px #1c1e22;letter-spacing:-0.16px;">Cancel</div>
<div class="r" style="left:2136px;top:1420px;width:307px;height:71px;background:#27339b;border-radius:14px;box-shadow:0 2px 4px rgba(0,0,0,0.12)"></div>
<svg class="i" style="left:2167.0px;top:1438.2px;" width="33.5" height="33.5" viewBox="0 0 24 24" fill="none" stroke="#fff" stroke-width="2.0" stroke-linecap="round" stroke-linejoin="round"><path d="M15.2 3a2 2 0 0 1 1.4.6l3.8 3.8a2 2 0 0 1 .6 1.4V19a2 2 0 0 1-2 2H5a2 2 0 0 1-2-2V5a2 2 0 0 1 2-2z"/><path d="M17 21v-7a1 1 0 0 0-1-1H8a1 1 0 0 0-1 1v7"/><path d="M7 3v4a1 1 0 0 0 1 1h7"/></svg>
<div class="t" style="left:2215.8px;top:1440.9px;font-size:30.14px;line-height:30.14px;color:#fff;font-family:'Liberation Sans', sans-serif;-webkit-text-stroke:0.55px #fff;letter-spacing:-0.86px;">Create Session</div>
<div class="r" style="left:2812px;top:296px;width:22px;height:1230px;background:#e6e6e6;border-radius:11px"></div>
<div class="r" style="left:2812px;top:866px;width:22px;height:660px;background:#747474;border-radius:11px"></div>
<div class="r" style="left:2840px;top:290px;width:20px;height:6px;background:#ebebeb"></div>
<div class="r" style="left:2840px;top:296px;width:20px;height:1180px;background:#747474;border-radius:10px 0 0 10px"></div>
<div class="r" style="left:2840px;top:1470px;width:20px;height:40px;background:#e6e6e6;border-radius:0 0 0 10px"></div>
<div class="r" style="left:2840px;top:1296px;width:20px;height:180px;background:#747474;border-radius:0 0 0 10px"></div>
</div>
</body></html>
